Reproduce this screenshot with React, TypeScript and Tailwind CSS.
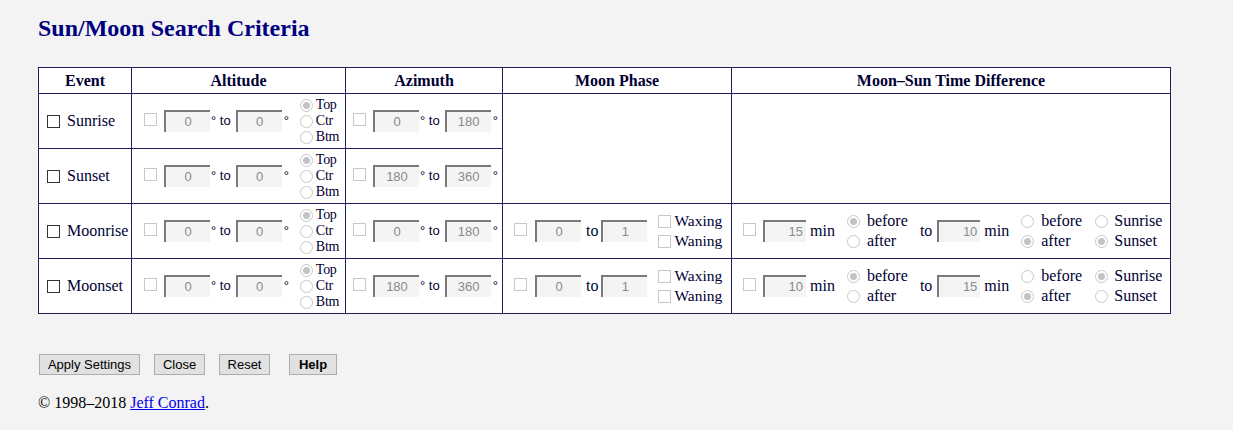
import React from "react";

const serif = "font-['Liberation_Serif','Times_New_Roman',serif]";
const sans = "font-['Liberation_Sans',Arial,sans-serif]";

function Box({ disabled }: { disabled?: boolean }) {
  return (
    <span
      className={
        "inline-block w-[13px] h-[13px] shrink-0 border bg-white " +
        (disabled ? "border-[#c8c8c8]" : "border-[#333333]")
      }
    />
  );
}

function Radio({ checked }: { checked?: boolean }) {
  return (
    <span className="flex w-[13px] h-[13px] shrink-0 items-center justify-center rounded-full border border-[#c8c8c8] bg-white">
      {checked ? <span className="w-[7px] h-[7px] rounded-full bg-[#c3c3c3]" /> : null}
    </span>
  );
}

function NumBox({ value, right, w = "w-[46px]" }: { value: string; right?: boolean; w?: string }) {
  return (
    <input
      type="text"
      disabled
      value={value}
      readOnly
      className={
        `${w} h-[22px] shrink-0 bg-[#f4f4f4] border-t-2 border-l-2 border-r-0 border-b-0 border-[#7a7a7a] text-[#8a8a8a] text-[13px] ${sans} ` +
        (right ? "text-right pr-[3px]" : "text-center")
      }
    />
  );
}

function RangeCell({ from, to, pad }: { from: string; to: string; pad: string }) {
  return (
    <>
      <span className={pad}>
        <Box disabled />
      </span>
      <span className="ml-[7px]">
        <NumBox value={from} />
      </span>
      <span className={`ml-[1px] text-[13px] ${sans}`}>° to</span>
      <span className="ml-[5px]">
        <NumBox value={to} />
      </span>
      <span className={`ml-[2px] text-[13px] ${sans}`}>°</span>
    </>
  );
}

function Altitude() {
  return (
    <div className="flex items-center">
      <RangeCell from="0" to="0" pad="ml-[12px]" />
      <div className="ml-[11px] flex flex-col text-[14px] leading-[16px] tracking-[-0.3px]">
        {["Top", "Ctr", "Btm"].map((l, i) => (
          <div key={l} className="flex items-center gap-[3px]">
            <Radio checked={i === 0} />
            <span>{l}</span>
          </div>
        ))}
      </div>
    </div>
  );
}

function Azimuth({ from, to }: { from: string; to: string }) {
  return (
    <div className="flex items-center">
      <RangeCell from={from} to={to} pad="ml-[7px]" />
    </div>
  );
}

function MoonPhase() {
  return (
    <div className="flex items-center">
      <span className="ml-[11px]">
        <Box disabled />
      </span>
      <span className="ml-[8px]">
        <NumBox value="0" />
      </span>
      <span className="ml-[5px]">to</span>
      <span className="ml-[3px]">
        <NumBox value="1" />
      </span>
      <div className="ml-[11px] flex flex-col text-[15.5px] leading-[20px]">
        {["Waxing", "Waning"].map((l) => (
          <div key={l} className="flex items-center gap-[3px]">
            <Box disabled />
            <span>{l}</span>
          </div>
        ))}
      </div>
    </div>
  );
}

function BeforeAfter({ sel, w }: { sel: number; w: string }) {
  return (
    <div className={`flex flex-col leading-[20px] ${w}`}>
      {["before", "after"].map((l, i) => (
        <div key={l} className="flex items-center gap-[7px]">
          <Radio checked={i === sel} />
          <span>{l}</span>
        </div>
      ))}
    </div>
  );
}

function TimeDiff({ a, b, s1, s2, s3 }: { a: string; b: string; s1: number; s2: number; s3: number }) {
  return (
    <div className="flex items-center">
      <span className="ml-[11px]">
        <Box disabled />
      </span>
      <span className="ml-[7px]">
        <NumBox value={a} right w="w-[43px]" />
      </span>
      <span className="ml-[4px]">min</span>
      <span className="ml-[12px]">
        <BeforeAfter sel={s1} w="w-[73px]" />
      </span>
      <span>to</span>
      <span className="ml-[5px]">
        <NumBox value={b} right w="w-[43px]" />
      </span>
      <span className="ml-[4px]">min</span>
      <span className="ml-[12px]">
        <BeforeAfter sel={s2} w="w-[74px]" />
      </span>
      <div className="flex flex-col leading-[20px]">
        {["Sunrise", "Sunset"].map((l, i) => (
          <div key={l} className="flex items-center gap-[6px]">
            <Radio checked={i === s3} />
            <span>{l}</span>
          </div>
        ))}
      </div>
    </div>
  );
}

function EventCell({ label }: { label: string }) {
  return (
    <div className="flex items-center pl-[8px] gap-[7px]">
      <Box />
      <span>{label}</span>
    </div>
  );
}

const td = "border border-[#1e1e5c] p-0 align-middle";
const th = "border border-[#1e1e5c] p-0 align-middle text-center font-bold";
const btn = "h-[21px] border border-[#adadad] bg-[#e1e1e1] text-center";

export default function App() {
  return (
    <div className={`min-h-[430px] bg-[#f3f3f3] px-[38px] pt-[14px] ${serif} text-[#000033]`}>
      <h1 className="text-[24px] leading-[28px] font-bold text-[#000080]">Sun/Moon Search Criteria</h1>
      <table className="mt-[25px] w-[1132px] border-collapse bg-white text-[16px] table-fixed">
        <colgroup>
          <col className="w-[93px]" />
          <col className="w-[214px]" />
          <col className="w-[157px]" />
          <col className="w-[229px]" />
          <col className="w-[439px]" />
        </colgroup>
        <thead>
          <tr className="h-[26px]">
            <th className={th}>Event</th>
            <th className={th}>Altitude</th>
            <th className={th}>Azimuth</th>
            <th className={th}>Moon Phase</th>
            <th className={th}>Moon–Sun Time Difference</th>
          </tr>
        </thead>
        <tbody>
          <tr className="h-[55px]">
            <td className={td}>
              <EventCell label="Sunrise" />
            </td>
            <td className={td}>
              <Altitude />
            </td>
            <td className={td}>
              <Azimuth from="0" to="180" />
            </td>
            <td className={td} rowSpan={2} />
            <td className={td} rowSpan={2} />
          </tr>
          <tr className="h-[55px]">
            <td className={td}>
              <EventCell label="Sunset" />
            </td>
            <td className={td}>
              <Altitude />
            </td>
            <td className={td}>
              <Azimuth from="180" to="360" />
            </td>
          </tr>
          <tr className="h-[55px]">
            <td className={td}>
              <EventCell label="Moonrise" />
            </td>
            <td className={td}>
              <Altitude />
            </td>
            <td className={td}>
              <Azimuth from="0" to="180" />
            </td>
            <td className={td}>
              <MoonPhase />
            </td>
            <td className={td}>
              <TimeDiff a="15" b="10" s1={0} s2={1} s3={1} />
            </td>
          </tr>
          <tr className="h-[55px]">
            <td className={td}>
              <EventCell label="Moonset" />
            </td>
            <td className={td}>
              <Altitude />
            </td>
            <td className={td}>
              <Azimuth from="180" to="360" />
            </td>
            <td className={td}>
              <MoonPhase />
            </td>
            <td className={td}>
              <TimeDiff a="10" b="15" s1={0} s2={1} s3={0} />
            </td>
          </tr>
        </tbody>
      </table>
      <div className={`mt-[40px] ml-[1px] flex items-center text-[13px] text-black ${sans}`}>
        <button className={`${btn} w-[101px]`}>Apply Settings</button>
        <button className={`${btn} ml-[14px] w-[51px]`}>Close</button>
        <button className={`${btn} ml-[14px] w-[51px]`}>Reset</button>
        <button className={`${btn} ml-[19px] w-[48px] font-bold`}>Help</button>
      </div>
      <p className="mt-[18px] text-[16px] leading-[20px] text-black">
        © 1998–2018{" "}
        <a href="#" className="text-[#0000ee] underline">
          Jeff Conrad
        </a>
        .
      </p>
    </div>
  );
}
